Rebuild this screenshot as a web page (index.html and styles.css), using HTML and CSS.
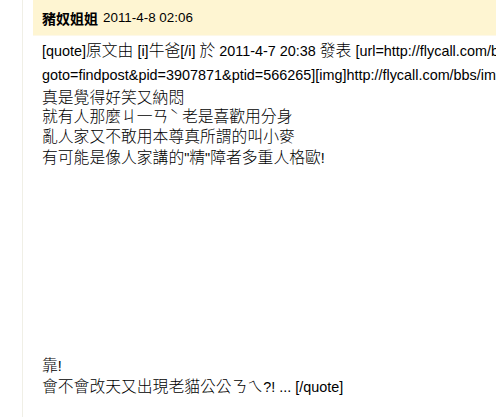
FILE: index.html
```html
<!DOCTYPE html>
<html>
<head>
<meta charset="utf-8">
<link rel="stylesheet" href="styles.css">
</head>
<body>
<div class="frame">
  <div class="post">
    <div class="post-head">
      <a class="author">豬奴姐姐</a>
      <span class="date">2011-4-8 02:06</span>
    </div>
    <div class="post-body">
      <div class="line h22">[quote]<span class="c">原文由</span> [i]<span class="c">牛爸</span>[/i] <span class="c">於</span> 2011-4-7 20:38 <span class="c">發表</span> [url=http://flycall.com/bbs/redirect.php?tid=566265&amp;</div>
      <div class="line h26">goto=findpost&amp;pid=3907871&amp;ptid=566265][img]http://flycall.com/bbs/images/common/back.gif[/img][/url]</div>
      <div class="line h20"><span class="c">真是覺得好笑又納悶</span></div>
      <div class="line h19"><span class="c">就有人那麼ㄐ一ㄢ<span class="tone">ˋ</span>老是喜歡用分身</span></div>
      <div class="line h21"><span class="c">亂人家又不敢用本尊真所謂的叫小麥</span></div>
      <div class="line h21"><span class="c">有可能是像人家講的</span>"<span class="c">精</span>"<span class="c">障者多重人格歐</span>!</div>
      <div class="spacer"></div>
      <div class="line h21"><span class="c">靠</span>!</div>
      <div class="line h21"><span class="c">會不會改天又出現老貓公公ㄋㄟ</span>?! ... [/quote]</div>
    </div>
  </div>
</div>
</body>
</html>
```
FILE: styles.css
```css
html, body {
  margin: 0;
  padding: 0;
  background: #ffffff;
  overflow: hidden;
}
body {
  font-family: "Liberation Sans", Arial, "Noto Sans CJK TC", sans-serif;
  color: #000;
}
.frame {
  margin-left: 22px;
  border-left: 1px solid #f0efe6;
  height: 417px;
  width: 900px;
  padding-left: 10px;
}
.post-head {
  background: #fef5d2;
  height: 36px;
  border-bottom: 1px solid #fdf8e8;
  box-sizing: border-box;
  display: flex;
  align-items: center;
  padding-left: 9px;
  font-size: 13.4px;
  gap: 5px;
}
.author {
  font-weight: bold;
  color: #000;
  text-decoration: none;
  font-family: "Noto Sans CJK TC", sans-serif;
  font-size: 14px;
}
.date {
  color: #000;
}
.post-body {
  padding: 4px 9px 5px;
  font-size: 14.4px;
}
.line {
  white-space: nowrap;
}
.c {
  font-family: "Noto Sans CJK TC", sans-serif;
  font-size: 15.8px;
  font-weight: 300;
  line-height: 1;
}
.tone {
  margin: 0 3px 0 1px;
}
.h26 { line-height: 26px; }
.h22 { line-height: 22px; }
.h21 { line-height: 21px; }
.h20 { line-height: 20px; }
.h19 { line-height: 19px; }
.spacer {
  height: 187px;
}
```
